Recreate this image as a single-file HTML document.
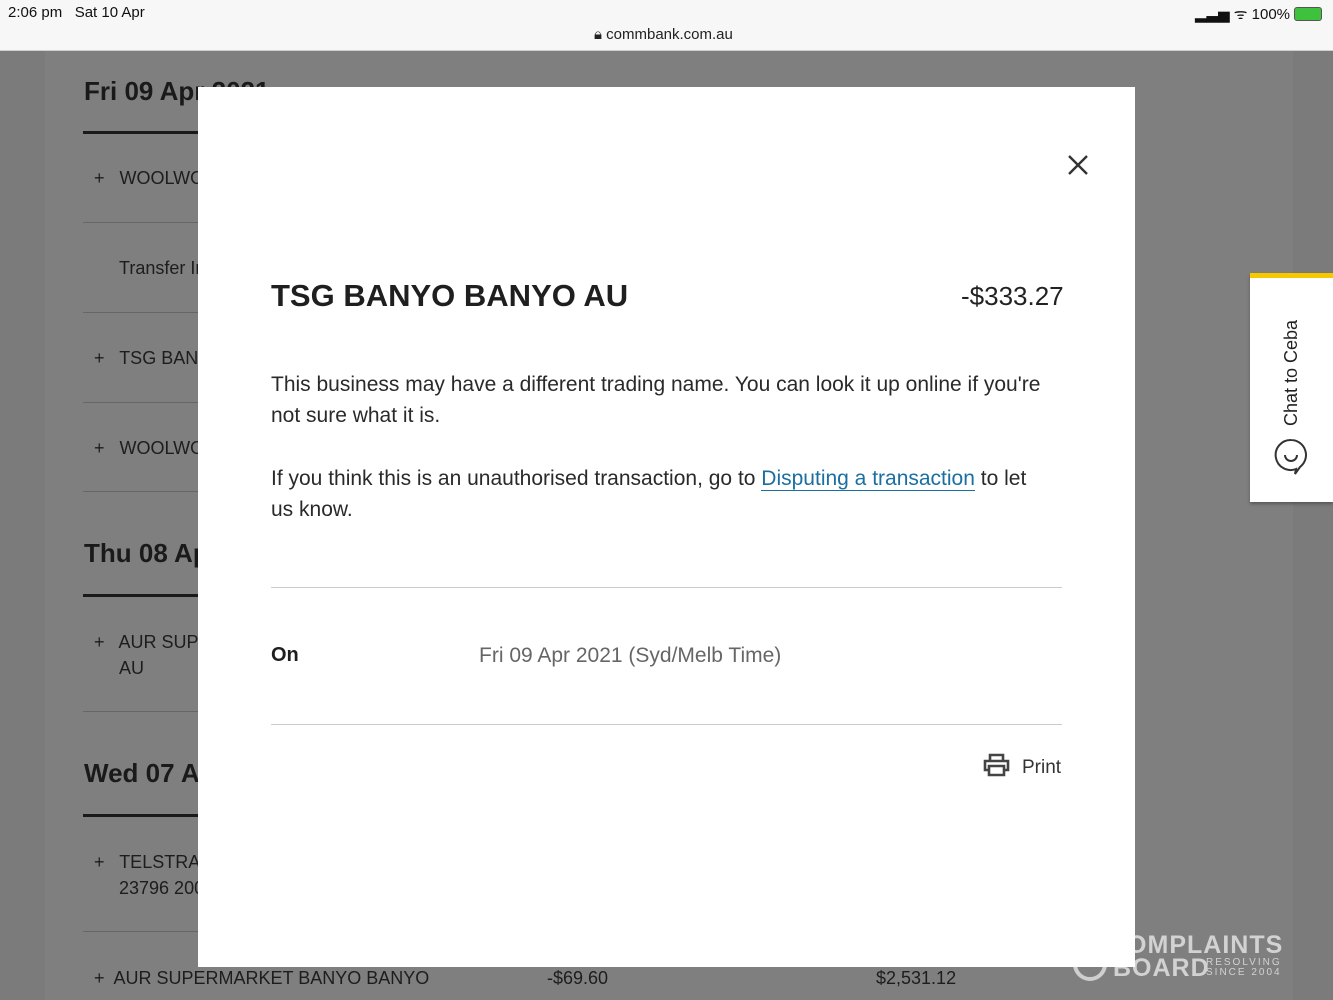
<!DOCTYPE html>
<html><head><meta charset="utf-8"><style>
*{margin:0;padding:0;box-sizing:border-box}
body{width:1333px;height:1000px;overflow:hidden;position:relative;background:#7b7b7b;font-family:"Liberation Sans",sans-serif;color:#1f1f1f}
.status{position:absolute;left:0;top:0;width:1333px;height:51px;background:#f7f7f7;border-bottom:1px solid #cfcfcf}
.abs{position:absolute;white-space:nowrap}
.page{position:absolute;left:45px;top:51px;width:1248px;height:949px;background:#7f7f7f}
.bg{color:#1d1d1d;font-size:18px}
.h{font-size:26px;font-weight:bold;color:#1a1a1a}
.line{position:absolute;left:83px;width:120px;height:3px;background:#1a1a1a}
.thin{position:absolute;left:83px;width:120px;height:1px;background:#666}
.modal{position:absolute;left:198px;top:87px;width:937px;height:880px;background:#fff}
.m{position:absolute;color:#222}
p.t{font-size:21px;line-height:31px;color:#2a2a2a}
</style></head><body>
<div class="status">
<div class="abs" style="left:8px;top:4px;font-size:15px;color:#111">2:06 pm&nbsp;&nbsp; Sat 10 Apr</div>
<div class="abs" style="left:594px;top:26px;font-size:15px;color:#222">🔒︎ commbank.com.au</div>
<div class="abs" style="left:1195px;top:4px;font-size:15px;color:#111">▂▃▅ ᯤ 100% <span style="display:inline-block;width:28px;height:14px;border:1.5px solid #555;border-radius:3px;background:#3ec23e;vertical-align:-2px"></span></div>
</div>
<div class="page"></div>
<div class="abs h" style="left:84px;top:76px">Fri 09 Apr 2021</div>
<div class="line" style="top:131px"></div>
<div class="abs bg" style="left:94px;top:168px">+&nbsp;&nbsp; WOOLWORTHS</div>
<div class="thin" style="top:222px"></div>
<div class="abs bg" style="left:119px;top:258px">Transfer In</div>
<div class="thin" style="top:312px"></div>
<div class="abs bg" style="left:94px;top:348px">+&nbsp;&nbsp; TSG BANYO</div>
<div class="thin" style="top:402px"></div>
<div class="abs bg" style="left:94px;top:438px">+&nbsp;&nbsp; WOOLWORTHS</div>
<div class="thin" style="top:491px"></div>
<div class="abs h" style="left:84px;top:538px">Thu 08 Apr</div>
<div class="line" style="top:594px"></div>
<div class="abs bg" style="left:94px;top:632px">+&nbsp;&nbsp; AUR SUPERMARKET</div>
<div class="abs bg" style="left:119px;top:658px">AU</div>
<div class="thin" style="top:711px"></div>
<div class="abs h" style="left:84px;top:758px">Wed 07 Apr</div>
<div class="line" style="top:814px"></div>
<div class="abs bg" style="left:94px;top:852px">+&nbsp;&nbsp; TELSTRA</div>
<div class="abs bg" style="left:119px;top:878px">23796 2000</div>
<div class="thin" style="top:931px"></div>
<div class="abs bg" style="left:94px;top:968px">+&nbsp; AUR SUPERMARKET BANYO BANYO</div>
<div class="abs bg" style="left:547px;top:968px">-$69.60</div>
<div class="abs bg" style="left:876px;top:968px">$2,531.12</div>
<svg class="abs" style="left:1071px;top:945px" width="38" height="38" viewBox="0 0 38 38"><circle cx="19" cy="19" r="15" fill="none" stroke="#cfcfcf" stroke-width="4"/></svg>
<div class="abs" style="left:1108px;top:934px;color:#d2d2d2;font-weight:bold;font-size:25px;line-height:22px;letter-spacing:1px">COMPLAINTS</div>
<div class="abs" style="left:1113px;top:956px;color:#d2d2d2;font-weight:bold;font-size:25px;line-height:24px;letter-spacing:1px">BOARD</div>
<div class="abs" style="left:1206px;top:958px;color:#d2d2d2;font-size:10px;line-height:10px;letter-spacing:2px">RESOLVING<br>SINCE 2004</div>

<div class="modal">
<svg class="m" style="left:869px;top:67px" width="22" height="22" viewBox="0 0 22 22"><path d="M2 2L20 20M20 2L2 20" stroke="#333" stroke-width="2.4"/></svg>
<div class="m abs" style="left:73px;top:191px;font-size:31px;font-weight:bold;color:#1f1f1f">TSG BANYO BANYO AU</div>
<div class="m abs" style="left:763px;top:194px;font-size:26px;color:#222">-$333.27</div>
<div class="m" style="left:73px;top:282px;width:770px"><p class="t">This business may have a different trading name. You can look it up online if you're not sure what it is.</p></div>
<div class="m" style="left:73px;top:376px;width:770px"><p class="t">If you think this is an unauthorised transaction, go to <span style="color:#1a6fa0;border-bottom:1.5px solid #1a6fa0">Disputing a transaction</span> to let us know.</p></div>
<div class="m" style="left:73px;top:500px;width:791px;height:1px;background:#ccc"></div>
<div class="m abs" style="left:73px;top:557px;font-size:20px;font-weight:bold;color:#1f1f1f">On</div>
<div class="m abs" style="left:281px;top:557px;font-size:21px;color:#666">Fri 09 Apr 2021 (Syd/Melb Time)</div>
<div class="m" style="left:73px;top:637px;width:791px;height:1px;background:#ccc"></div>
<svg class="m" style="left:785px;top:666px" width="27" height="24" viewBox="0 0 27 24"><path d="M7 7V2H20V7M5 17H2V8H25V17H22M6 13H21V22H6Z" fill="none" stroke="#444" stroke-width="2.6"/></svg>
<div class="m abs" style="left:824px;top:670px;font-size:19px;color:#333">Print</div>
</div>

<div class="abs" style="left:1250px;top:273px;width:83px;height:229px;background:#fff;border-top:5px solid #f5c800;box-shadow:0 2px 3px rgba(0,0,0,.3)">
<div class="abs" style="left:31px;top:148px;transform:rotate(-90deg);transform-origin:0 0;font-size:18px;color:#222">Chat to Ceba</div>
<svg class="abs" style="left:24px;top:160px" width="34" height="38" viewBox="0 0 34 38"><path d="M17 2A15 15 0 1 0 22 31L21 36L26 29A15 15 0 0 0 17 2Z" fill="none" stroke="#333" stroke-width="2"/><path d="M11 17A6 6 0 0 0 23 17" fill="none" stroke="#333" stroke-width="2"/></svg>
</div>
</body></html>
